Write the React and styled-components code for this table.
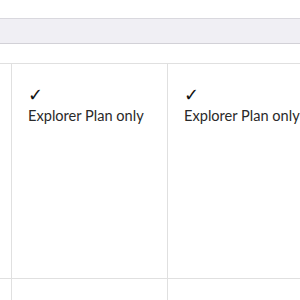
import React from "react";
import styled, { createGlobalStyle } from "styled-components";

const Global = createGlobalStyle`
  html, body { margin: 0; padding: 0; background: #fff; }
  body { font-family: "Lato", "Liberation Sans", sans-serif; color: #222; overflow: hidden; }
`;

const Page = styled.div`
  width: 300px;
  height: 300px;
  overflow: hidden;
  padding-top: 18px;
  box-sizing: border-box;
`;

const Bar = styled.div`
  height: 24px;
  margin-left: -4px;
  width: 320px;
  background: #f0eff4;
  border-top: 1px solid #d9d8de;
  border-bottom: 1px solid #d2d1d7;
  border-radius: 3px;
`;

const Table = styled.div`
  margin-top: 19px;
  display: grid;
  grid-template-columns: 12px 156px 156px;
  border-top: 1px solid #e0e0e0;
`;

const Cell = styled.div`
  height: ${(p) => (p.$h ? p.$h : 215)}px;
  border-right: 1px solid #e0e0e0;
  border-bottom: 1px solid #e0e0e0;
  padding: 22px 0 0 16px;
  box-sizing: border-box;
  ${(p) => p.$edge && "padding: 0;"}
`;

const Check = styled.div`
  font-family: "DejaVu Sans", sans-serif;
  font-weight: bold;
  font-size: 18px;
  line-height: 17px;
  color: #111;
`;

const Label = styled.div`
  margin-top: 4px;
  font-size: 14.6px;
  line-height: 18px;
  color: #2a2a2a;
  white-space: nowrap;
`;

export default function App() {
  return (
    <>
      <Global />
      <Page>
        <Bar />
        <Table>
          <Cell $edge />
          <Cell>
            <Check>✓</Check>
            <Label>Explorer Plan only</Label>
          </Cell>
          <Cell>
            <Check>✓</Check>
            <Label>Explorer Plan only</Label>
          </Cell>
          <Cell $edge $h={60} />
          <Cell $edge $h={60} />
          <Cell $edge $h={60} />
        </Table>
      </Page>
    </>
  );
}
